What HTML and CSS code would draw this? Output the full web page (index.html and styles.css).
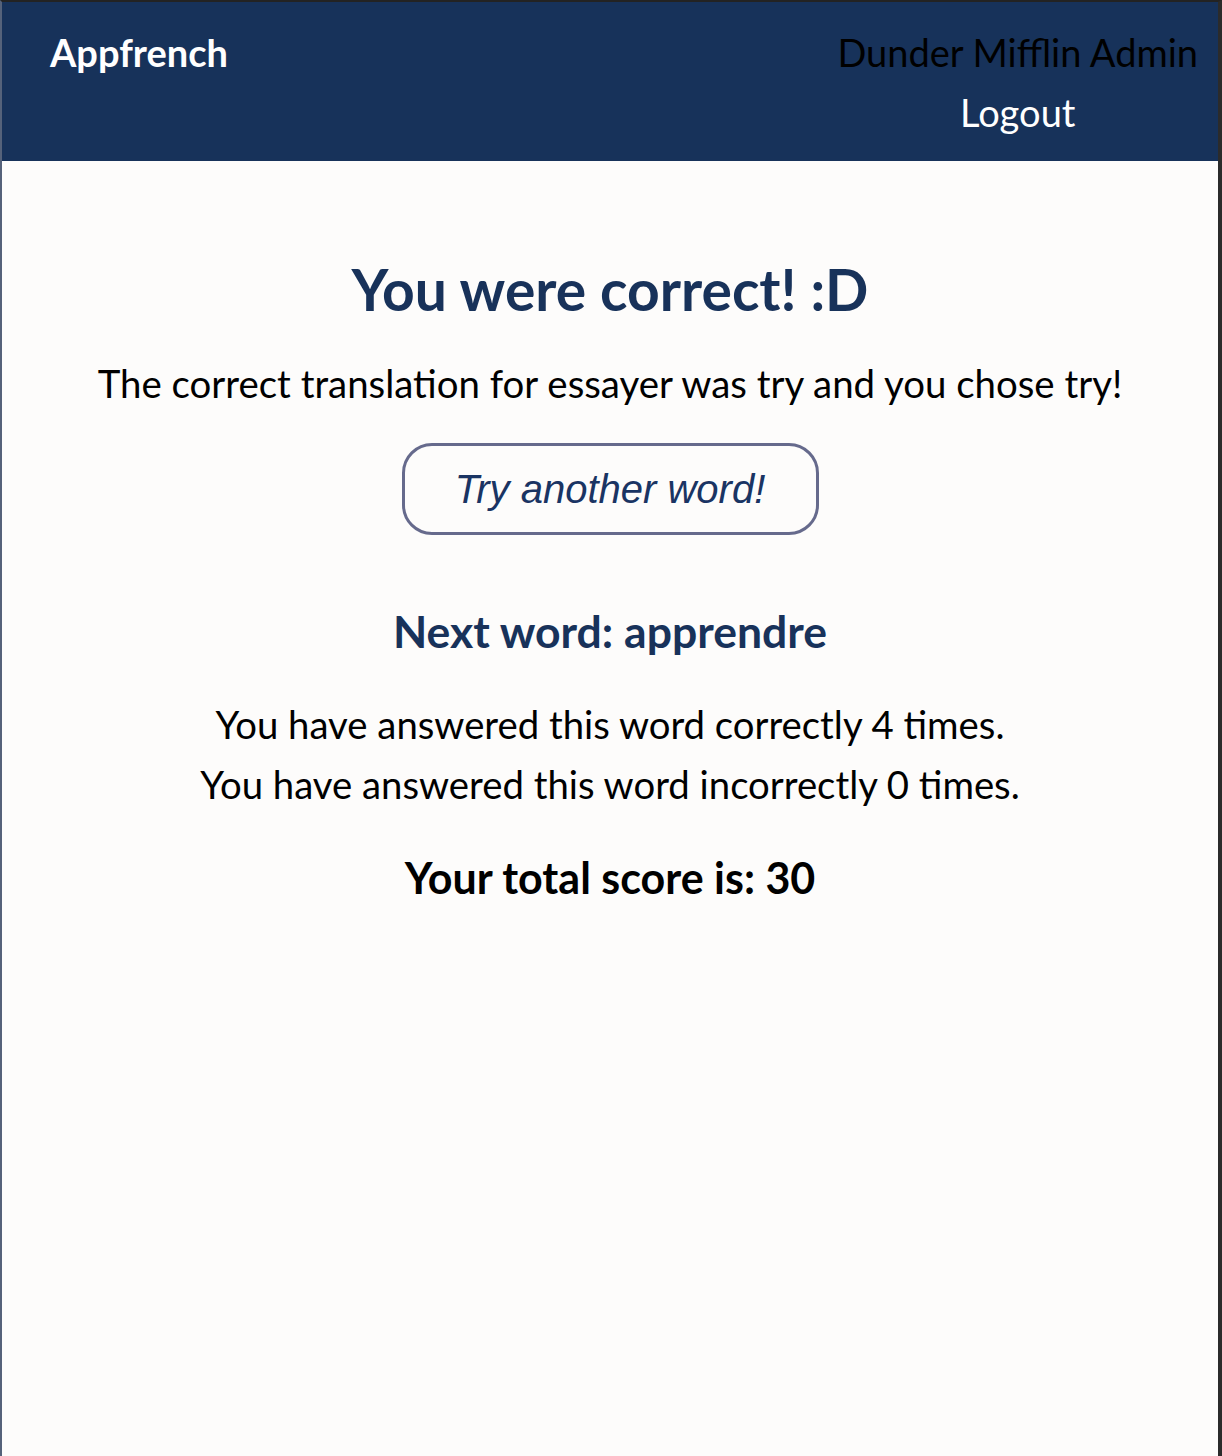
FILE: index.html
```html
<!DOCTYPE html>
<html lang="en">
<head>
<meta charset="utf-8">
<title>Appfrench</title>
<link rel="stylesheet" href="styles.css">
</head>
<body>
<div class="frame">
  <header class="topbar">
    <div class="brand">Appfrench</div>
    <div class="user">
      <div class="user-name">Dunder Mifflin Admin</div>
      <a class="logout" href="#">Logout</a>
    </div>
  </header>
  <main class="result">
    <h1 class="result-title">You were correct! :D</h1>
    <p class="result-text">The correct translation for essayer was try and you chose try!</p>
    <button class="next-btn" type="button">Try another word!</button>
    <h2 class="next-word">Next word: apprendre</h2>
    <div class="stats">
      <p class="stat">You have answered this word correctly 4 times.</p>
      <p class="stat">You have answered this word incorrectly 0 times.</p>
    </div>
    <p class="score">Your total score is: 30</p>
  </main>
</div>
</body>
</html>
```

FILE: styles.css
```css
* { box-sizing: border-box; }

html, body {
  margin: 0;
  padding: 0;
  background: #fdfcfb;
}

body {
  font-family: "Lato", "Open Sans", sans-serif;
}

.frame {
  min-height: 1456px;
  border-top: 2px solid #232323;
  border-left: 2px solid #55627a;
  border-right: 4px solid #2b2b2b;
  background: #fdfcfb;
}

.topbar {
  height: 159px;
  background: #17325a;
  display: flex;
  justify-content: space-between;
  align-items: flex-start;
  padding: 20px 20px 0 48px;
}

.brand {
  color: #ffffff;
  font-weight: 700;
  font-size: 38px;
  line-height: 60px;
}

.user {
  display: flex;
  flex-direction: column;
  align-items: center;
  font-size: 38px;
  line-height: 60px;
}

.user-name {
  color: #000000;
}

.logout {
  color: #ffffff;
  text-decoration: none;
}

.result {
  display: flex;
  flex-direction: column;
  align-items: center;
  text-align: center;
  padding-top: 88px;
}

.result-title {
  margin: 0;
  color: #18325a;
  font-size: 57px;
  font-weight: 700;
  line-height: 80px;
}

.result-text {
  margin: 24px 0 0;
  color: #000;
  font-size: 38.4px;
  line-height: 60px;
}

.next-btn {
  margin-top: 30px;
  width: 417px;
  height: 92px;
  border: 3px solid #666a8c;
  border-radius: 30px;
  background: #fdfcfb;
  color: #1a3463;
  font-family: "Liberation Sans", Arial, sans-serif;
  font-style: italic;
  font-size: 40px;
}

.next-word {
  margin: 66px 0 0;
  color: #18325a;
  font-size: 44.5px;
  font-weight: 700;
  line-height: 60px;
}

.stats {
  margin-top: 33px;
}

.stat {
  margin: 0;
  font-size: 38.3px;
  line-height: 60px;
  color: #000;
}

.score {
  margin: 34px 0 0;
  font-size: 43px;
  font-weight: 700;
  line-height: 60px;
  color: #000;
}
```
